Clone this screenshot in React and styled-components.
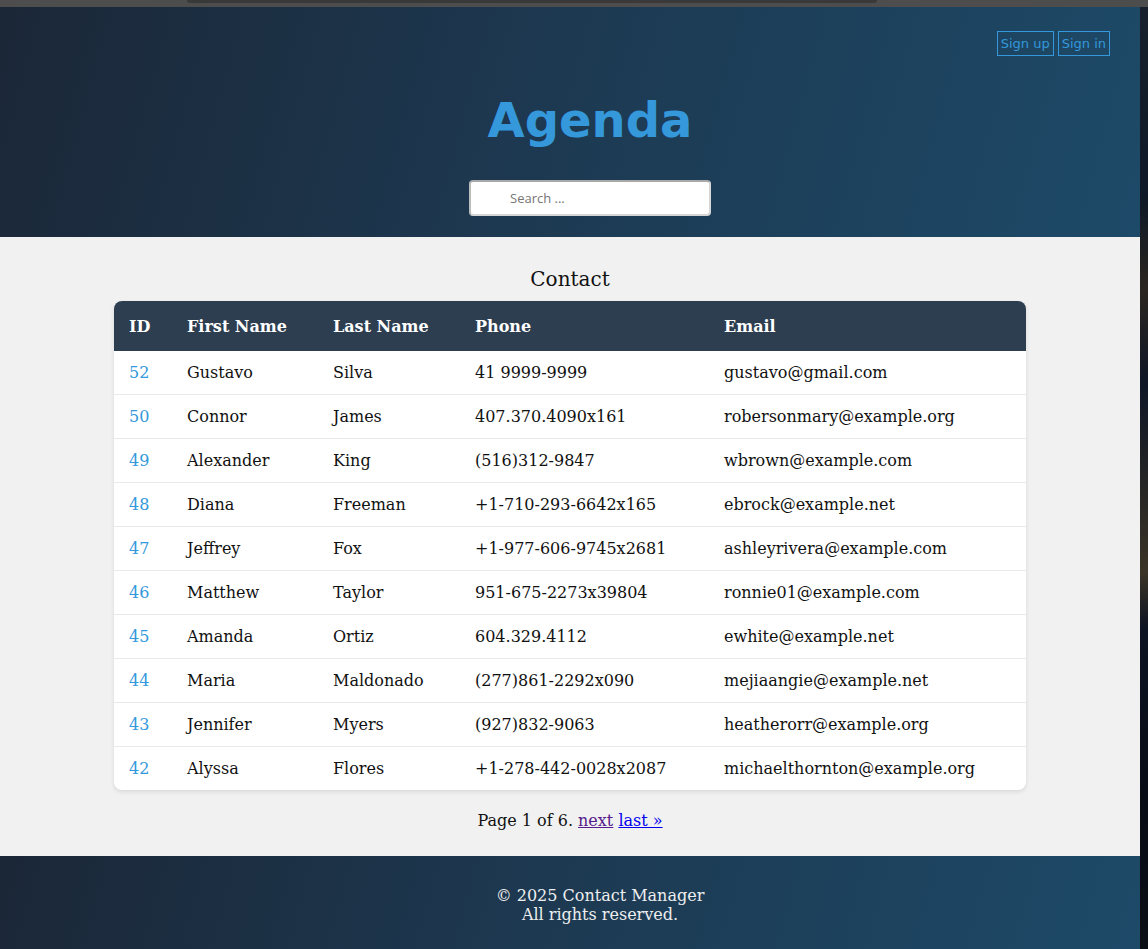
import React from 'react';
import styled, { createGlobalStyle } from 'styled-components';

const contacts = [
  { id: 52, first: 'Gustavo', last: 'Silva', phone: '41 9999-9999', email: 'gustavo@gmail.com' },
  { id: 50, first: 'Connor', last: 'James', phone: '407.370.4090x161', email: 'robersonmary@example.org' },
  { id: 49, first: 'Alexander', last: 'King', phone: '(516)312-9847', email: 'wbrown@example.com' },
  { id: 48, first: 'Diana', last: 'Freeman', phone: '+1-710-293-6642x165', email: 'ebrock@example.net' },
  { id: 47, first: 'Jeffrey', last: 'Fox', phone: '+1-977-606-9745x2681', email: 'ashleyrivera@example.com' },
  { id: 46, first: 'Matthew', last: 'Taylor', phone: '951-675-2273x39804', email: 'ronnie01@example.com' },
  { id: 45, first: 'Amanda', last: 'Ortiz', phone: '604.329.4112', email: 'ewhite@example.net' },
  { id: 44, first: 'Maria', last: 'Maldonado', phone: '(277)861-2292x090', email: 'mejiaangie@example.net' },
  { id: 43, first: 'Jennifer', last: 'Myers', phone: '(927)832-9063', email: 'heatherorr@example.org' },
  { id: 42, first: 'Alyssa', last: 'Flores', phone: '+1-278-442-0028x2087', email: 'michaelthornton@example.org' },
];

const columns = [
  { label: 'ID', width: 58 },
  { label: 'First Name', width: 146 },
  { label: 'Last Name', width: 142 },
  { label: 'Phone', width: 249 },
  { label: 'Email', width: 317 },
];

const App = () => {
  return (
    <>
      <GlobalStyle />
      <TopStrip>
        <TabBar />
      </TopStrip>
      <Page>
        <Main>
          <Header>
            <AuthRow>
              <AuthButton>Sign up</AuthButton>
              <AuthButton>Sign in</AuthButton>
            </AuthRow>
            <Brand>
              <Title>Agenda</Title>
              <SearchInput type="text" placeholder="Search ..." />
            </Brand>
          </Header>

          <Content>
            <SectionTitle>Contact</SectionTitle>
            <Table>
              <colgroup>
                {columns.map((c) => (
                  <col key={c.label} width={c.width} />
                ))}
              </colgroup>
              <thead>
                <tr>
                  {columns.map((c) => (
                    <Th key={c.label}>{c.label}</Th>
                  ))}
                </tr>
              </thead>
              <tbody>
                {contacts.map((item) => (
                  <Row key={item.id}>
                    <Td $accent>{item.id}</Td>
                    <Td>{item.first}</Td>
                    <Td>{item.last}</Td>
                    <Td>{item.phone}</Td>
                    <Td>{item.email}</Td>
                  </Row>
                ))}
              </tbody>
            </Table>
            <Pagination>
              Page 1 of 6. <PageLink href="#" $visited>next</PageLink>{' '}
              <PageLink href="#">last &raquo;</PageLink>
            </Pagination>
          </Content>

          <Footer>
            <FooterText>
              © 2025 Contact Manager
              <br />
              All rights reserved.
            </FooterText>
          </Footer>
        </Main>
        <Backdrop />
      </Page>
    </>
  );
};

export default App;

const GlobalStyle = createGlobalStyle`
  html, body {
    margin: 0;
    padding: 0;
    background: #0c1320;
  }
  body {
    font-family: "DejaVu Serif", serif;
    overflow: hidden;
  }
  * {
    box-sizing: border-box;
  }
`;

const TopStrip = styled.div`
  height: 7px;
  background: #4d4d4d;
  display: flex;
  padding-left: 187px;
`;

const TabBar = styled.div`
  width: 690px;
  height: 3px;
  background: #393939;
  border-radius: 0 0 3px 3px;
`;

const Page = styled.div`
  display: flex;
`;

const Main = styled.div`
  width: 1140px;
  display: flex;
  flex-direction: column;
  background: #f1f1f1;
`;

const Backdrop = styled.div`
  width: 8px;
  background: linear-gradient(
    180deg,
    #17202c 0%,
    #0f1826 20%,
    #2a2520 30%,
    #0f1626 40%,
    #3a3326 60%,
    #0d1322 66%,
    #070b14 85%,
    #0d0f16 100%
  );
`;

const Header = styled.header`
  height: 230px;
  padding: 24px 30px 0;
  background: linear-gradient(105deg, #1b2737 0%, #1d3850 45%, #1d4a68 100%);
  display: flex;
  flex-direction: column;
`;

const AuthRow = styled.div`
  display: flex;
  justify-content: flex-end;
  gap: 4px;
`;

const AuthButton = styled.button`
  font-family: "DejaVu Sans", sans-serif;
  font-size: 13px;
  line-height: 17px;
  color: #3498db;
  background: transparent;
  border: 1px solid #3498db;
  padding: 3px 3px;
  cursor: pointer;
`;

const Brand = styled.div`
  display: flex;
  flex-direction: column;
  align-items: center;
  padding-left: 40px;
`;

const Title = styled.h1`
  margin: 36px 0 0;
  font-family: "DejaVu Sans", sans-serif;
  font-size: 48px;
  line-height: 56px;
  font-weight: bold;
  color: #3498db;
`;

const SearchInput = styled.input`
  margin-top: 32px;
  width: 242px;
  height: 36px;
  padding: 0 10px 0 39px;
  font-family: "Open Sans", sans-serif;
  font-size: 13px;
  background: #fff;
  border: 2px solid #d6d6d6;
  border-top-color: #a8a8a8;
  border-left-color: #bcbcbc;
  border-radius: 4px;
  outline: none;

  &::placeholder {
    color: #757575;
  }
`;

const Content = styled.main`
  display: flex;
  flex-direction: column;
  align-items: center;
  padding: 30px 0 26px;
`;

const SectionTitle = styled.h2`
  margin: 0 0 10px;
  font-size: 20px;
  line-height: 24px;
  font-weight: normal;
  color: #111;
`;

const Table = styled.table`
  width: 912px;
  table-layout: fixed;
  border-collapse: collapse;
  background: #fff;
  border-radius: 8px;
  overflow: hidden;
  box-shadow: 0 2px 4px rgba(0, 0, 0, 0.1);
`;

const Th = styled.th`
  padding: 16px 15px 14px;
  background: #2c3e50;
  color: #fff;
  text-align: left;
  font-size: 16px;
  line-height: 20px;
  font-weight: bold;
`;

const Row = styled.tr`
  border-bottom: 1px solid #eaeaea;

  &:last-child {
    border-bottom: none;
  }
`;

const Td = styled.td`
  padding: 12px 15px;
  font-size: 16px;
  line-height: 19px;
  color: ${(props) => (props.$accent ? '#3498db' : '#111')};
  white-space: nowrap;
`;

const Pagination = styled.div`
  margin-top: 21px;
  font-size: 16px;
  line-height: 19px;
  color: #111;
`;

const PageLink = styled.a`
  color: ${(props) => (props.$visited ? '#551a8b' : '#0000ee')};
  text-decoration: underline;
`;

const Footer = styled.footer`
  height: 93px;
  padding: 30px 0 0 60px;
  background: linear-gradient(105deg, #1b2737 0%, #1d3850 45%, #1d4a68 100%);
  display: flex;
  justify-content: center;
`;

const FooterText = styled.p`
  margin: 0;
  text-align: center;
  font-size: 16px;
  line-height: 19px;
  color: #eee;
`;
